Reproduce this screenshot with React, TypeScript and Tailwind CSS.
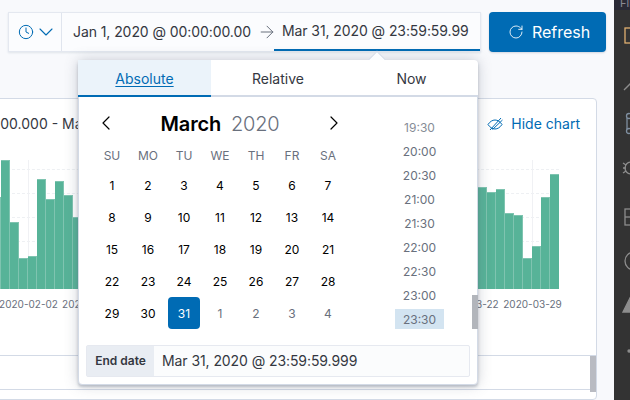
import React from "react";
import { ChevronDown, ChevronLeft, ChevronRight, Clock, ArrowRight, RotateCw } from "lucide-react";

const FILL = 200;
const barTops = [
  197, 160, 222, 258, 256, 179, 199, 181, 195, 217,
  ...Array(44).fill(FILL),
  187, 192, 189, 213, 215, 258, 246, 197, 174,
];

const axisLabels = [
  "2020-02-02", "2020-02-09", "2020-02-16", "2020-02-23", "2020-03-01",
  "2020-03-08", "2020-03-15", "2020-03-22", "2020-03-29",
];

const weeks = [
  ["1", "2", "3", "4", "5", "6", "7"],
  ["8", "9", "10", "11", "12", "13", "14"],
  ["15", "16", "17", "18", "19", "20", "21"],
  ["22", "23", "24", "25", "26", "27", "28"],
  ["29", "30", "31", "1", "2", "3", "4"],
];

const times = ["19:30", "20:00", "20:30", "21:00", "21:30", "22:00", "22:30", "23:00", "23:30"];

function EyeSlash() {
  return (
    <svg width="16" height="16" viewBox="0 0 16 16" fill="none" stroke="#006bb4" strokeWidth="1" className="shrink-0">
      <path d="M1 8.500C3 5.500 5.500 4 8 4c2.500 0 5 1.500 7 4.500-2 3-4.500 4.500-7 4.500s-5-1.500-7-4.500z" />
      <path d="M3 14L14 2M5.500 13.500L15.500 4" />
    </svg>
  );
}

function Chart() {
  return (
    <div className="relative w-[567px] ml-[141px] h-[129px] mt-[15px]">
      <div className="absolute inset-x-0 top-[9px] border-t border-dashed border-[#eef0f3]"></div>
      <div className="absolute inset-x-0 top-[33px] border-t border-dashed border-[#eef0f3]"></div>
      <div className="absolute inset-x-0 top-[57px] border-t border-dashed border-[#eef0f3]"></div>
      <div className="absolute inset-x-0 top-[81px] border-t border-dashed border-[#eef0f3]"></div>
      <div className="absolute top-0 bottom-0 left-[36px] w-px bg-[#f0f1f4]"></div>
      <div className="absolute top-0 bottom-0 left-[540px] w-px bg-[#f0f1f4]"></div>
      <div className="relative flex items-end h-full">
        {barTops.map(function (top, i) {
          return (
            <div
              key={i}
              className="w-[9px] bg-[#57b398] border-t border-r border-[#7fc4b0] last:border-r-0"
              style={{ height: 289 - top }}
            ></div>
          );
        })}
      </div>
    </div>
  );
}

function Panel() {
  return (
    <div className="mt-[46px] ml-[-150px] w-[747px] bg-white border border-[#d3dae6] rounded-[4px] flex flex-col h-[320px]">
      <div className="flex items-center justify-between h-[43px] mt-[3px] pl-2 pr-4 text-sm">
        <span className="text-[#343741] whitespace-nowrap">Jan 1, 2020 @ 00:00:00.000 - Mar 31, 2020 @ 23:59:59.999</span>
        <span className="flex items-center gap-2 text-[#006bb4] whitespace-nowrap">
          <EyeSlash />
          Hide chart
        </span>
      </div>
      <Chart />
      <div className="flex ml-[146px] mt-[7px] text-[10px] text-[#69707d] leading-4">
        {axisLabels.map(function (label) {
          return (
            <span key={label} className="w-[63px] shrink-0 text-center">{label}</span>
          );
        })}
      </div>
      <div className="flex justify-end mt-[43px] h-[35px] border-y border-[#d3dae6]">
        <div className="w-[6px] h-[36px] bg-[#b9bbc2]"></div>
      </div>
    </div>
  );
}

function Calendar() {
  return (
    <div className="w-[252px] ml-4">
      <div className="flex items-center justify-between h-[44px] mt-1">
        <div className="w-6 flex justify-center">
          <ChevronLeft className="w-6 h-6 text-black" strokeWidth={1.200} />
        </div>
        <div className="flex items-center gap-[10px] text-xl leading-6 tracking-[-0.2px] pt-[2px]">
          <span className="font-semibold text-black">March</span>
          <span className="font-light text-[#69707d]">2020</span>
        </div>
        <div className="w-6 flex justify-center">
          <ChevronRight className="w-6 h-6 text-black" strokeWidth={1.200} />
        </div>
      </div>
      <div className="grid grid-cols-7 h-5 text-xs text-[#69707d] text-center leading-[22px]">
        <span>SU</span><span>MO</span><span>TU</span><span>WE</span><span>TH</span><span>FR</span><span>SA</span>
      </div>
      <div className="mt-1 grid grid-cols-7 text-xs text-center">
        {weeks.map(function (week, w) {
          return week.map(function (day, d) {
            let tone = "text-black";
            if (w === 4 && d > 2) {
              tone = "text-[#69707d]";
            }
            return (
              <div key={w + "-" + d} className="h-8 flex items-center justify-center">
                {w === 4 && d === 2 ? (
                  <span className="w-8 h-8 pt-[2px] rounded-[4px] bg-[#006bb4] text-white flex items-center justify-center">{day}</span>
                ) : (
                  <span className={"pt-[2px] " + tone}>{day}</span>
                )}
              </div>
            );
          });
        })}
      </div>
    </div>
  );
}

function TimeList() {
  return (
    <div className="w-[49px] ml-[49px] pt-5 flex flex-col gap-1 text-xs text-center text-[#69707d]">
      {times.map(function (t, i) {
        let cls = "h-5 leading-[22px]";
        if (i === 0) {
          cls = "h-5 leading-[22px] opacity-80";
        }
        if (i === times.length - 1) {
          cls = "h-5 leading-[22px] bg-[#d3e4f1]";
        }
        return <div key={t} className={cls}>{t}</div>;
      })}
    </div>
  );
}

function Popover() {
  return (
    <div className="absolute left-[78px] top-[60px] w-[400px] h-[325px] bg-white rounded-[4px] border border-[#d3dae6] shadow-[0_2px_3px_rgba(90,100,120,0.35),0_0_14px_rgba(90,100,120,0.3)] flex flex-col box-border">
      <div className="absolute left-[290px] top-[-7px] w-4 h-4 rotate-45 bg-[#fcfdfe] border-l border-t border-[#d3dae6]"></div>
      <div className="relative flex h-[35px] text-sm border-b-2 border-[#d3dae6] -mx-px -mt-px box-content bg-white rounded-t-[4px]">
        <div className="w-[133px] -mb-[2px] pt-[3px] bg-[#ebf3fa] border-b-2 border-[#006bb4] flex items-center justify-center text-[#006bb4] underline underline-offset-2">Absolute</div>
        <div className="w-[134px] pt-[3px] flex items-center justify-center text-[#343741]">Relative</div>
        <div className="flex-1 pt-[3px] flex items-center justify-center text-[#343741]">Now</div>
      </div>
      <div className="flex -ml-px">
        <Calendar />
        <TimeList />
        <div className="ml-auto self-end w-[6px] h-[34px] bg-[#b2b5bb] -mr-px"></div>
      </div>
      <div className="flex mt-4 mx-[7px] h-8 border border-[#e6e9f0] rounded-[2px] bg-[#fbfcfd]">
        <div className="w-[67px] bg-[#e9edf3] flex items-center justify-center text-xs font-semibold text-[#343741]">End date</div>
        <div className="flex-1 flex items-center pl-2 text-sm text-[#343741] tracking-[-0.08px]">Mar 31, 2020 @ 23:59:59.999</div>
      </div>
    </div>
  );
}

function Sidebar() {
  return (
    <div className="w-4 shrink-0 bg-[#333333] overflow-hidden flex flex-col">
      <div className="h-[10px] bg-[#2a2a36] text-[11px] leading-[6px] text-[#8a8a94] pl-[6px] overflow-hidden">File</div>
      <svg width="16" height="390" viewBox="0 10 16 390" fill="none" stroke="#8d8d8d" strokeWidth="1.300">
        <rect x="11" y="28" width="12" height="15" stroke="#e0b070" />
        <path d="M10 90l8-8" />
        <circle cx="15" cy="116" r="2.500" stroke="#7f8fa0" />
        <circle cx="15" cy="131" r="2.500" stroke="#7f8fa0" />
        <path d="M13 118v11" stroke="#7f8fa0" />
        <circle cx="17" cy="168" r="6" />
        <path d="M9 163l3 2M9 168h3M9 173l3-2" />
        <rect x="11" y="209" width="14" height="16" />
        <path d="M11 217h10" />
        <circle cx="20" cy="261" r="9" />
        <path d="M9 312l8-16 8 16z" fill="#8d8d8d" />
        <circle cx="15" cy="351" r="1" fill="#8d8d8d" />
      </svg>
    </div>
  );
}

export default function App() {
  return (
    <div className="relative w-[630px] h-[400px] overflow-hidden flex font-['Inter',sans-serif]">
      <div className="w-[614px] shrink-0 bg-[#f8f9fc] flex flex-col overflow-hidden">
        <div className="h-0 shadow-[0_1px_4px_rgba(70,80,100,0.55)]"></div>
        <div className="flex gap-2 pt-3 px-2">
          <div className="flex flex-1 h-10 bg-[#fbfcfe] border border-[#e4e8f0] shadow-[0_1px_2px_rgba(152,162,179,0.25)] text-sm text-[#343741] tracking-[-0.08px]">
            <div className="w-[53px] flex items-center pl-[9px] border-r border-[#e0e5ee] text-[#006bb4]">
              <Clock className="w-4 h-4" strokeWidth={1.500} />
              <ChevronDown className="w-6 h-6" strokeWidth={1.100} />
            </div>
            <div className="flex-1 flex items-center pl-[11px] whitespace-nowrap">
              <span>Jan 1, 2020 @ 00:00:00.00</span>
              <ArrowRight className="w-5 h-5 ml-[6px] mr-[-3px] text-[#69707d]" strokeWidth={1.200} />
              <span className="h-full flex items-center px-2 w-[206px] border-b-2 border-[#006bb4] overflow-hidden">Mar 31, 2020 @ 23:59:59.99</span>
            </div>
          </div>
          <div className="w-[118px] h-10 rounded-[4px] bg-[#006bb4] text-white text-base flex items-center pl-[19px] gap-2 shadow-[0_1px_2px_rgba(152,162,179,0.4)]">
            <RotateCw className="w-4 h-4" strokeWidth={1.300} />
            Refresh
          </div>
        </div>
        <Panel />
      </div>
      <Sidebar />
      <Popover />
    </div>
  );
}
